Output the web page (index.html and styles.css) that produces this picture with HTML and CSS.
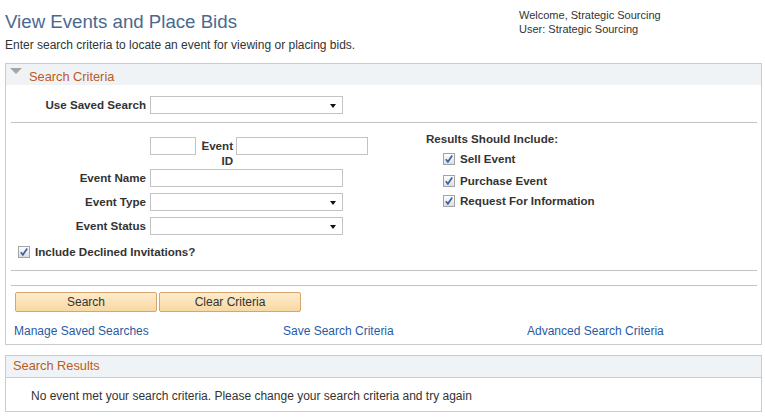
FILE: index.html
```html
<!DOCTYPE html>
<html lang="en">
<head>
<meta charset="utf-8">
<title>View Events and Place Bids</title>
<link rel="stylesheet" href="styles.css">
</head>
<body>
<div class="page-head">
  <div class="title-block">
    <h1 class="page-title">View Events and Place Bids</h1>
    <p class="page-sub">Enter search criteria to locate an event for viewing or placing bids.</p>
  </div>
  <div class="welcome">
    <div>Welcome, Strategic Sourcing</div>
    <div>User: Strategic Sourcing</div>
  </div>
</div>

<section class="box criteria">
  <div class="box-head"><span class="twisty"></span><span class="box-title">Search Criteria</span></div>

  <div class="field-row saved">
    <label class="lbl">Use Saved Search</label>
    <div class="select"><select></select></div>
  </div>

  <div class="sep"></div>

  <div class="mid">
    <div class="left-col">
      <div class="id-row">
        <input class="txt small" type="text">
        <div class="id-label"><span class="dash"></span>Event ID</div>
        <input class="txt big" type="text">
      </div>
      <div class="field-row">
        <label class="lbl">Event Name</label>
        <input class="txt" type="text">
      </div>
      <div class="field-row">
        <label class="lbl">Event Type</label>
        <div class="select"><select></select></div>
      </div>
      <div class="field-row">
        <label class="lbl">Event Status</label>
        <div class="select"><select></select></div>
      </div>
      <div class="check-row declined">
        <svg class="cb" width="12" height="12" viewBox="0 0 12 12"><defs><linearGradient id="g1" x1="0" y1="0" x2="0" y2="1"><stop offset="0" stop-color="#ffffff"/><stop offset="1" stop-color="#dcdcdc"/></linearGradient></defs><rect x="0.5" y="0.5" width="11" height="11" fill="url(#g1)" stroke="#a3a3a3"/><path d="M2.8 6.2 L4.9 8.8 L9.2 2.6" stroke="#3563a8" stroke-width="1.7" fill="none"/></svg>
        <span>Include Declined Invitations?</span>
      </div>
    </div>
    <div class="right-col">
      <div class="rs-head">Results Should Include:</div>
      <div class="check-row r1">
        <svg class="cb" width="12" height="12" viewBox="0 0 12 12"><rect x="0.5" y="0.5" width="11" height="11" fill="url(#g1)" stroke="#a3a3a3"/><path d="M2.8 6.2 L4.9 8.8 L9.2 2.6" stroke="#3563a8" stroke-width="1.7" fill="none"/></svg>
        <span>Sell Event</span>
      </div>
      <div class="check-row r2">
        <svg class="cb" width="12" height="12" viewBox="0 0 12 12"><rect x="0.5" y="0.5" width="11" height="11" fill="url(#g1)" stroke="#a3a3a3"/><path d="M2.8 6.2 L4.9 8.8 L9.2 2.6" stroke="#3563a8" stroke-width="1.7" fill="none"/></svg>
        <span>Purchase Event</span>
      </div>
      <div class="check-row r3">
        <svg class="cb" width="12" height="12" viewBox="0 0 12 12"><rect x="0.5" y="0.5" width="11" height="11" fill="url(#g1)" stroke="#a3a3a3"/><path d="M2.8 6.2 L4.9 8.8 L9.2 2.6" stroke="#3563a8" stroke-width="1.7" fill="none"/></svg>
        <span>Request For Information</span>
      </div>
    </div>
  </div>

  <div class="sep flush"></div>
  <div class="sep sep2"></div>

  <div class="buttons">
    <button class="btn" type="button">Search</button>
    <button class="btn" type="button">Clear Criteria</button>
  </div>

  <div class="links">
    <a href="#">Manage Saved Searches</a>
    <a href="#">Save Search Criteria</a>
    <a href="#">Advanced Search Criteria</a>
  </div>
</section>

<section class="box results">
  <div class="box-head results-head"><span class="box-title">Search Results</span></div>
  <div class="results-body">No event met your search criteria. Please change your search criteria and try again</div>
</section>
</body>
</html>
```
FILE: styles.css
```css
* { box-sizing: border-box; }

body {
  margin: 0;
  font-family: "Liberation Sans", Arial, sans-serif;
  font-size: 12px;
  color: #333333;
  background: #ffffff;
}

.page-head {
  display: grid;
  grid-template-columns: 514px 1fr;
  padding-left: 5px;
}

.page-title {
  margin: 0;
  padding-top: 11px;
  font-size: 18.67px;
  line-height: 22px;
  font-weight: normal;
  color: #4a6890;
}

.page-sub {
  margin: 5px 0 0;
  font-size: 12px;
  line-height: 14px;
  color: #333333;
}

.welcome {
  padding-top: 8px;
  font-size: 11px;
  line-height: 14px;
  color: #333333;
}

.box {
  margin: 0 3px 0 5px;
  border: 1px solid #cbcbcb;
}

.criteria { margin-top: 11px; padding-bottom: 6px; }

.box-head {
  display: flex;
  align-items: flex-start;
  height: 21px;
  padding-top: 4px;
  background: #eff3f5;
}

.twisty {
  width: 0;
  height: 0;
  margin-left: 4px;
  margin-right: 7px;
  border-left: 6px solid transparent;
  border-right: 6px solid transparent;
  border-top: 6px solid #a6a6a6;
}

.box-title {
  font-size: 12.8px;
  line-height: 17px;
  color: #bd5a22;
}

.field-row {
  display: grid;
  grid-template-columns: 140px 193px;
  column-gap: 4px;
  align-items: center;
  height: 18px;
  margin-bottom: 6px;
}

.field-row.saved { margin-top: 11px; margin-bottom: 0; }

.lbl {
  text-align: right;
  font-weight: bold;
  font-size: 11.6px;
  line-height: 18px;
  color: #333333;
}

.txt {
  height: 18px;
  width: 193px;
  border: 1px solid #c3c3c3;
  background: #ffffff;
  padding: 0 3px;
  font: inherit;
  margin: 0;
}

.select {
  position: relative;
  height: 18px;
  width: 193px;
}

.select select {
  -webkit-appearance: none;
  appearance: none;
  width: 100%;
  height: 18px;
  border: 1px solid #c3c3c3;
  border-radius: 0;
  background: #ffffff;
  margin: 0;
  font: inherit;
}

.select::after {
  content: "";
  position: absolute;
  right: 7px;
  top: 8px;
  border-left: 3.5px solid transparent;
  border-right: 3.5px solid transparent;
  border-top: 4px solid #111111;
}

.sep {
  margin: 8px 4px 0 5px;
  border-top: 1px solid #c2c2c2;
}

.sep.flush { margin-top: 0; }
.sep2 { margin-top: 14px; }

.mid {
  display: grid;
  grid-template-columns: 420px 1fr;
}

.left-col { padding-top: 14px; padding-bottom: 11px; }

.id-row {
  display: flex;
  align-items: flex-start;
  height: 32px;
  margin-bottom: 0;
  padding-left: 144px;
}

.txt.small { width: 46px; }
.txt.big { width: 132px; }

.id-label {
  position: relative;
  width: 40px;
  padding-right: 3px;
  text-align: right;
  font-weight: bold;
  font-size: 11.6px;
  line-height: 15px;
  padding-top: 1px;
}

.dash {
  position: absolute;
  left: 6px;
  top: 4px;
  width: 3px;
  height: 1px;
  background: #9a9a9a;
}

.check-row {
  display: flex;
  align-items: center;
  height: 14px;
  font-weight: bold;
  font-size: 11.6px;
  line-height: 14px;
  color: #333333;
}

.cb { flex: none; display: block; }

.declined { margin-top: 10px; }
.declined .cb { margin-left: 12px; margin-right: 5px; }

.right-col { padding-top: 9px; }

.rs-head {
  font-weight: bold;
  font-size: 11.6px;
  line-height: 14px;
}

.right-col .cb { margin-left: 17px; margin-right: 5px; }
.r1 { margin-top: 6px; }
.r2 { margin-top: 8px; }
.r3 { margin-top: 6px; }

.buttons {
  display: flex;
  gap: 2px;
  margin-top: 6px;
  padding-left: 9px;
}

.btn {
  width: 142px;
  height: 20px;
  margin: 0;
  padding: 0;
  border: 1px solid #dba46a;
  border-radius: 2px;
  background: linear-gradient(#fdeccd, #f8d8a2);
  font: inherit;
  font-size: 12px;
  line-height: 18px;
  color: #333333;
}

.links {
  display: grid;
  grid-template-columns: 269px 244px 1fr;
  margin-top: 12px;
  padding-left: 8px;
  line-height: 14px;
}

.links a {
  color: #1f5ba6;
  text-decoration: none;
}

.results { margin-top: 10px; }

.results-head {
  padding-top: 1px;
  padding-left: 7px;
  border-bottom: 1px solid #cbcbcb;
  height: 22px;
}

.results-head .box-title { line-height: 18px; }

.results-body {
  padding: 11px 0 8px 25px;
  line-height: 14px;
  color: #333333;
}
```
